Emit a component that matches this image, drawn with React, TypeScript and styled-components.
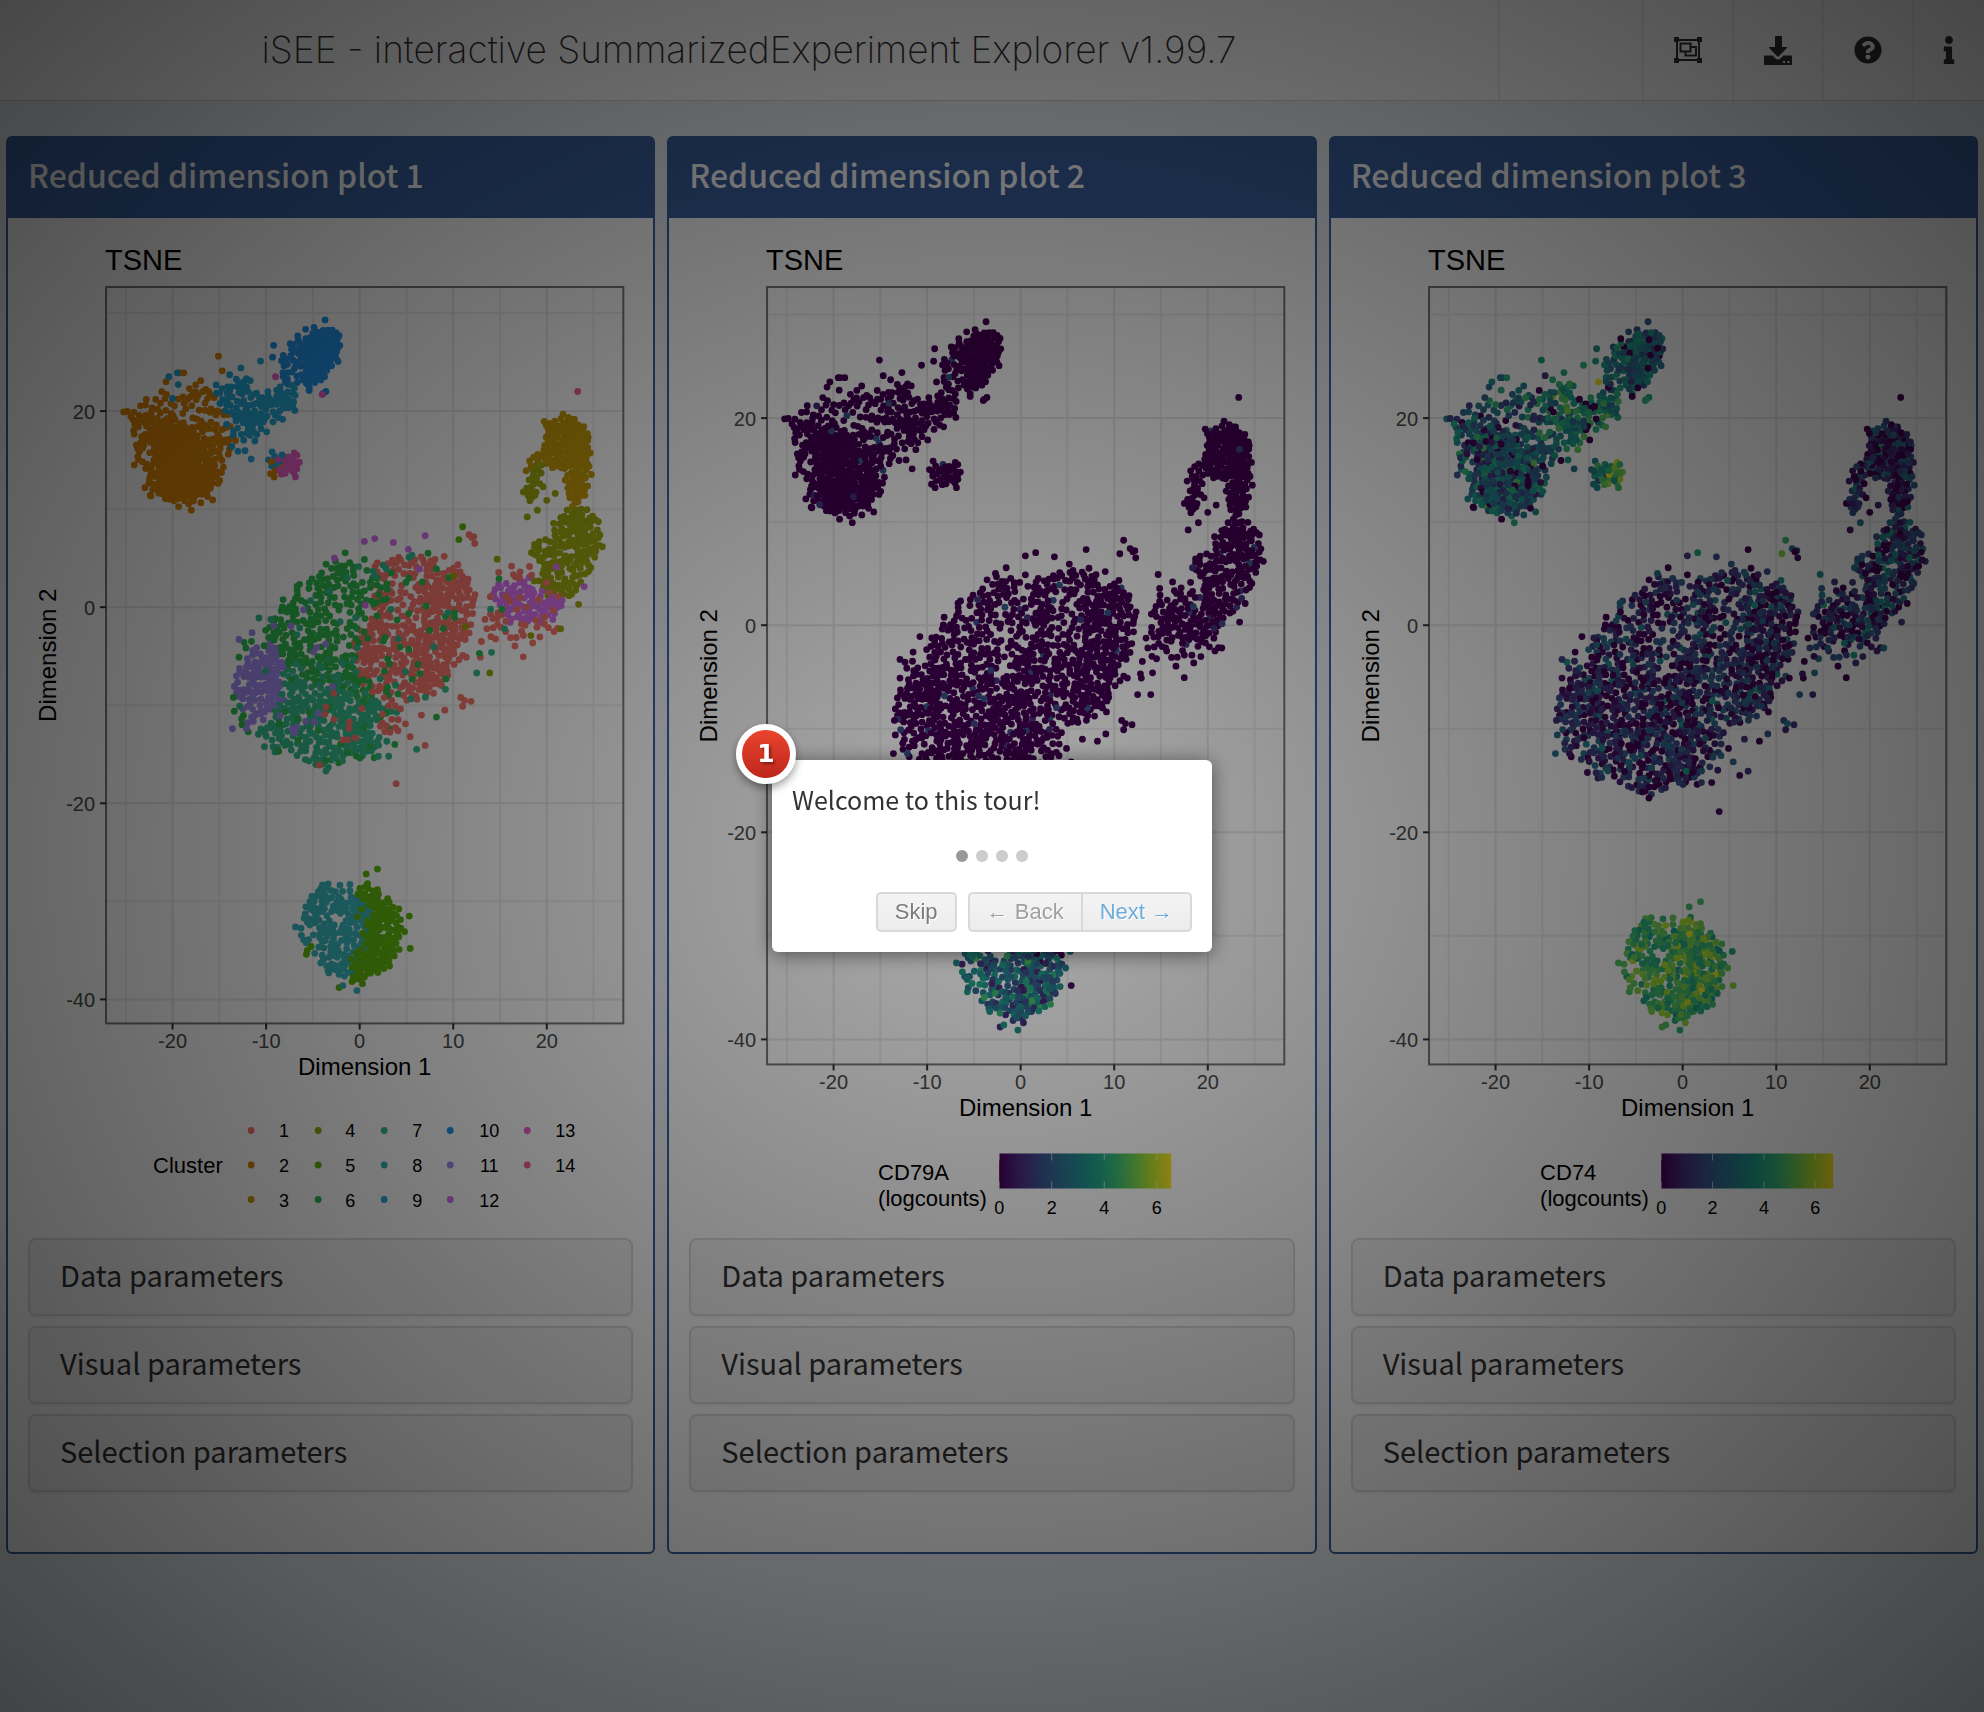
import React from "react";
import styled, { createGlobalStyle, css } from "styled-components";
import { FaInfo, FaQuestionCircle } from "react-icons/fa";

const uiFont = `"Noto Sans CJK SC", "Noto Sans", sans-serif`;
const plotFont = `"Liberation Sans", Arial, sans-serif`;
const brand = "#3b62a2";

const GlobalStyle = createGlobalStyle`
  *, *::before, *::after { box-sizing: border-box; }
  body { margin: 0; background: #ecf0f5; font-family: ${uiFont}; color: #333; }
  button { font: inherit; color: inherit; cursor: pointer; }
`;

/* ---------- header ---------- */

const Header = styled.header`
  display: flex;
  height: 101px;
  background: #fff;
  border-bottom: 1px solid #d2d6de;
`;

const Logo = styled.h1`
  flex: 0 1 1500px;
  margin: 0;
  padding: 0 24px;
  border-right: 2px solid #eee;
  font-family: Inter, "Liberation Sans", sans-serif;
  font-size: 37px;
  font-weight: 200;
  line-height: 100px;
  text-align: center;
  white-space: nowrap;
`;

const Nav = styled.nav`
  flex: 1;
  display: flex;
  justify-content: flex-end;
`;

const NavButton = styled.button<{ $width: number }>`
  display: flex;
  align-items: center;
  justify-content: center;
  width: ${(p) => p.$width}px;
  padding: 0;
  border: 0;
  border-left: 2px solid #eee;
  background: none;
  font-size: 28px;
`;

const GroupIcon = () => (
  <svg width="28" height="26" viewBox="0 0 28 26" fill="none" stroke="currentColor" strokeWidth="2">
    <path d="M3 3h22v20H3z" />
    <path d="M6.5 6.5h10v8h-10z" />
    <path d="M17 10h5v8.500h-10.500v-4" />
    <g fill="currentColor" stroke="none">
      <path d="M0 0h5v5H0zM23 0h5v5h-5zM0 21h5v5H0zM23 21h5v5h-5z" />
    </g>
  </svg>
);

const DownloadIcon = () => (
  <svg width="28" height="29" viewBox="0 0 28 29" fill="currentColor">
    <path d="M11 1q0-1 1-1h5q1 0 1 1v10h4.500q1 0 .4 1l-8 8.200q-.9.800-1.800 0l-8-8.200q-.6-1 .4-1H11z" />
    <path
      fillRule="evenodd"
      d="M1 19.500h7.500l3.300 3.200q2.200 1.800 4.400 0l3.300-3.200H27q1 0 1 1V28q0 1-1 1H1q-1 0-1-1v-7.500q0-1 1-1zM19 25v2h2v-2zM23.500 25v2h2v-2z"
    />
  </svg>
);

/* ---------- panels ---------- */

const Board = styled.main`
  display: grid;
  grid-template-columns: repeat(3, minmax(0, 1fr));
  gap: 12px;
  padding: 35px 6px 40px;
`;

const Box = styled.section`
  border: 2px solid ${brand};
  border-radius: 6px;
  background: #fff;
`;

const BoxTitle = styled.h2`
  margin: 0;
  padding: 12px 20px 20px;
  background: ${brand};
  color: #fff;
  font-size: 32px;
  font-weight: 500;
  line-height: 48px;
`;

const BoxBody = styled.div`
  padding: 20px 20px 60px;
`;

const Parameters = styled.div`
  display: flex;
  flex-direction: column;
  gap: 10px;
`;

const ParameterButton = styled.button`
  height: 78px;
  padding: 0 30px 6px;
  border: 2px solid #ddd;
  border-radius: 8px;
  background: #f5f5f5;
  box-shadow: 0 2px 2px rgba(0, 0, 0, 0.05);
  font-size: 29px;
  line-height: 40px;
  text-align: left;
`;

/* ---------- data ---------- */

type Pt = [number, number];
interface Cell {
  x: number;
  y: number;
  cluster: number;
  cd79a: number;
  cd74: number;
}

const clusterColors = [
  "#f8766d", "#dc8508", "#c49a0c", "#9ba610", "#5fb40e", "#30b84e", "#35bb8c",
  "#38b4ba", "#26aad8", "#2394ea", "#a08aee", "#d670ee", "#ee60cc", "#f4629e",
];

function makeRandom(seed: number) {
  let s = seed;
  return () => {
    s = (s + 0x6d2b79f5) | 0;
    let t = Math.imul(s ^ (s >>> 15), 1 | s);
    t = (t + Math.imul(t ^ (t >>> 7), 61 | t)) ^ t;
    return ((t ^ (t >>> 14)) >>> 0) / 4294967296;
  };
}

const random = makeRandom(42);
const gauss = () => random() + random() + random() + random() - 2;

function inside(x: number, y: number, poly: Pt[]) {
  let hit = false;
  for (let i = 0, j = poly.length - 1; i < poly.length; j = i++) {
    const [xi, yi] = poly[i];
    const [xj, yj] = poly[j];
    if (yi > y !== yj > y && x < ((xj - xi) * (y - yi)) / (yj - yi) + xi) hit = !hit;
  }
  return hit;
}

const blob: Pt[] = [[-13.9, -8.2], [-12.8, -4.2], [-10.1, -1], [-7, 1.6], [-5.4, 3.6], [-2.4, 5], [0.7, 4.9], [4.3, 5.2], [8.1, 5.4], [9.2, 4.3], [11, 4.3], [12, 2.7], [12.4, 0.1], [12, -2.8], [10.1, -6.1], [9.2, -8.6], [5.6, -10], [3.9, -11.5], [4.7, -13.3], [2, -15.1], [-3.6, -16.3], [-6.3, -15.5], [-9.7, -14.4], [-11.9, -13], [-13.5, -11.5]];

/* [cluster, number of cells, outline] */
const regions: [number, number, Pt[]][] = [
  [2, 250, [[-24.7, 19.8], [-23.4, 21.3], [-21.6, 22.1], [-19.6, 21.6], [-16.9, 22.9], [-15.5, 22.2], [-14.6, 20.2], [-13.5, 18.4], [-14.2, 14], [-15.3, 12.7], [-16, 11.1], [-18, 10.3], [-20.9, 10.9], [-22.5, 11.6], [-22.9, 14], [-24.1, 14.7], [-24.1, 16.9]]],
  [2, 130, [[-22.4, 19.5], [-18, 17.5], [-15.5, 15], [-16, 12.500], [-18, 11.5], [-21, 11.2], [-21.5, 13.5]]],
  [9, 120, [[-15.3, 22.7], [-12.4, 23.1], [-9.7, 22], [-7.4, 22.7], [-6.3, 21.6], [-6.7, 20.5], [-8.8, 19.1], [-9.7, 18], [-11.5, 16.9], [-12.8, 15.8], [-15.1, 16.4], [-13.7, 18], [-14.2, 19.8], [-15.3, 20.5]]],
  [10, 90, [[-5.1, 28.8], [-3.8, 28], [-2.6, 27.6], [-2.4, 25.6], [-3.3, 24.7], [-4.7, 23.1], [-6, 22.6], [-8.8, 23.5], [-8.1, 24.9], [-7.6, 26.5], [-6.3, 28]]],
  [10, 75, [[-4.6, 28], [-2.6, 27.4], [-2.6, 25.8], [-4.6, 23.2], [-5.4, 23.4], [-5.2, 26]]],
  [9, 8, [[-9.4, 15.8], [-8, 15.6], [-8.4, 14.2], [-9.4, 14.2]]],
  [2, 5, [[-9.2, 14.2], [-8.4, 15], [-8.4, 14], [-9.2, 13.7]]],
  [13, 20, [[-8.5, 14.3], [-7.5, 15.2], [-6.9, 14.9], [-6.9, 14.1], [-8, 14]]],
  [3, 120, [[20.5, 18.7], [22.3, 19.2], [23.4, 18.7], [24.3, 17.4], [24.1, 14.3], [21.6, 14.2], [19.8, 15.1], [19.8, 16.2], [20.3, 17.6]]],
  [3, 32, [[22.1, 14.2], [24.1, 14.2], [24, 12.2], [23.6, 10.9], [22.5, 10.9], [22.5, 12.5]]],
  [4, 22, [[17.8, 10.8], [18.2, 12.5], [18.9, 14], [19.8, 14.3], [18.8, 12.8], [18.1, 11.2]]],
  [3, 6, [[18.5, 13.6], [18.9, 15.6], [19.1, 14.4]]],
  [4, 165, [[23.6, 10.3], [24.8, 9.4], [25.6, 8.1], [25, 4.5], [24, 3.2], [22.3, 1.1], [20.2, 1.6], [18.9, 2.7], [19.6, 4.5], [18.2, 5.6], [19.8, 6.8], [21, 8.3], [22, 10.1]]],
  [12, 75, [[14.2, 1.5], [16.2, 2.7], [17.8, 2.7], [19.8, 1.6], [22, 0.3], [20.4, -0.8], [19.5, -1.8], [16.9, -1.3], [15.2, -0.8]]],
  [1, 50, [[13.3, -1.9], [14.5, 3.4], [18, 4.4], [21.5, 2], [22.2, -1.2], [18.3, -4.6], [16.4, -4.6], [13.8, -3]]],
  [11, 105, [[-13.7, -8.2], [-12.6, -6], [-11.3, -4.4], [-9.4, -3.7], [-8.7, -6.4], [-7.8, -9.3], [-9.6, -10.6], [-11.7, -12], [-12.4, -9.7]]],
  [1, 340, [[0.7, 4.3], [4.3, 5], [8.1, 5.2], [9.2, 4.1], [10.9, 4.1], [11.7, 2.7], [12.1, 0.1], [11.8, -2.8], [10, -6], [9, -8.4], [5.6, -9.7], [-0.2, -7.5], [-0.6, -3.5], [1.6, -0.9], [2, 3]]],
  [1, 60, [[8.500, 3], [11.8, 3], [11.8, -1.5], [9.5, -7], [6, -8.5], [5, -4]]],
  [6, 215, [[-9.6, -3.9], [-9.8, -1.2], [-6.8, 1.4], [-5.2, 3.4], [-2.4, 4.7], [0.7, 3.9], [4.4, 2.9], [3.8, 1.2], [1.6, -0.9], [1, -4.2], [2, -7.9], [-0.2, -9.3], [-7, -7.1]]],
  [7, 250, [[-7.4, -5.7], [-0.2, -5.7], [1.1, -9.3], [4, -10.4], [1.1, -11.5], [2.7, -14.2], [0.2, -15.2], [-3.6, -16], [-6.3, -15.2], [-9.6, -14.2], [-11.7, -12.8], [-9.6, -11.5], [-7.8, -9.3]]],
  [6, 100, blob],
  [7, 45, blob],
  [11, 20, [[-12, -4], [-4, 1], [-1, -11], [-8, -14]]],
  [1, 26, [[-4, -8], [2, -8], [5, -12], [1, -14], [-4, -15]]],
  [8, 165, [[-6.5, -32.4], [-5.2, -29.6], [-3.8, -28.2], [-1.4, -28.2], [0.1, -29.6], [1.2, -31.3], [0.8, -34], [-0.4, -36.5], [-1.4, -37.6], [-3.2, -37], [-4.5, -35.6], [-6.1, -34]]],
  [5, 145, [[-0.4, -29.8], [0.8, -27.8], [1.6, -29.4], [3.5, -30.4], [4.1, -32.3], [4.1, -34], [3.6, -35.5], [2.6, -36.8], [1.1, -37.4], [-0.3, -38.4], [-0.7, -36.4], [0.3, -34], [0, -32.3]]],
];

const scattered: [number, Pt[]][] = [
  [1, [[11.7, 7.4], [12.2, 7.2], [12.3, 6.5], [12, 7.1], [10.8, -9.2], [11.2, -9.5], [11.9, -9.6], [11, -10.1], [9.1, -10.5], [6.6, -11], [5.4, -13.2], [7, -14.1], [4.9, -11.9], [4.1, -12.6], [3.9, -18], [-4.3, -16.1], [13, -3.5], [12.9, -5.1], [11.4, -5.1]]],
  [2, [[-15.1, 25.6], [-14.7, 24.1], [-19.3, 23.9], [-18.8, 23.9], [-20.7, 23], [-18.2, 22.3], [-17, 23.1], [-24.1, 14.5], [-22.4, 11.4], [-18, 9.9]]],
  [4, [[17.9, 9.2], [19, 9.9], [20, 10.9], [20.9, 11.6], [19.6, 12.3], [25.6, 6.3], [14.7, 4.9], [13.9, -6.7], [21.5, -2.2], [23.4, 0.3], [18.3, -2.9], [11.3, -2], [10, 3.2]]],
  [5, [[11, 8.2], [10.6, 6.9], [5.3, -31.5], [4.8, -33.1], [5.4, -34.8], [1.9, -26.7], [0.7, -27.2], [-2.2, -38.8], [0.3, -38.4], [-5.7, -35.4], [-5.6, -35], [-5.2, -34.6]]],
  [6, [[8.2, -11.2], [-13.5, -9.2], [-13.4, -10.6], [12.8, -4.7], [-12.9, -5.1], [7.3, 5.5], [14.9, 2.9], [15.2, -0.2]]],
  [7, [[14.1, -4.6], [12.5, -6.7], [15.5, -2.2], [14, -0.2], [2, -15.2], [3.1, -15.2], [6.1, -14.5], [-3.6, -16.7]]],
  [8, [[-0.3, -39.1], [-1.8, -38.6], [-3.3, -37.3]]],
  [9, [[-20.4, 23.5], [-19.5, 23.9], [-19.4, 22.7], [-12.7, 24.4], [-13.9, 23.7], [-12.1, 23.3], [-11.6, 15.1], [-20, 21.3], [-10.6, 25.1], [-13, 15.9]]],
  [10, [[-3.7, 29.3], [-9.2, 26.7], [-9.3, 25.5], [-5.4, 22.1], [-3.6, 22], [-3.9, 21.8]]],
  [11, [[-13.6, -12.4], [-12.1, -12.4], [-12.9, -3.3], [-11.5, -2.6], [-9.2, -1.9]]],
  [12, [[0.5, 6.7], [1.6, 7], [3.6, 6.6], [5.2, 5.9], [7, 7.3], [-2.7, 5], [24, 2.1], [21, 4.1], [6.4, 3.9], [0.6, 0.2]]],
  [13, [[-9, 23.5], [-4, 21.7]]],
  [14, [[23.3, 22]]],
];

/* mean and spread of the CD74 logcounts in each cluster */
const cd74Levels: Record<number, Pt> = {
  1: [1.1, 1.1], 2: [2.6, 1.1], 3: [1, 1.1], 4: [1.7, 1.2], 5: [4.9, 0.7], 6: [0.9, 1.1], 7: [0.9, 1.1],
  8: [4.9, 0.7], 9: [3.8, 0.9], 10: [2.9, 0.9], 11: [1, 1], 12: [1.2, 1.1], 13: [5.4, 0.8], 14: [0, 0],
};

function makeCell(x: number, y: number, cluster: number): Cell {
  const [mean, spread] = cd74Levels[cluster];
  const cd74 = Math.max(0, Math.min(6.6, mean + gauss() * spread * 1.6));
  const bCell = y < -25;
  const cd79a = bCell ? Math.max(0, 2.5 + gauss() * 1.8) : random() < 0.03 ? 0.8 + random() * 1.2 : 0;
  return { x, y, cluster, cd79a, cd74: random() < 0.06 && !bCell && cluster !== 13 ? 0 : cd74 };
}

function makeCells(): Cell[] {
  const cells: Cell[] = [];
  for (const [cluster, count, poly] of regions) {
    const xs = poly.map((p) => p[0]);
    const ys = poly.map((p) => p[1]);
    const x0 = Math.min(...xs);
    const x1 = Math.max(...xs);
    const y0 = Math.min(...ys);
    const y1 = Math.max(...ys);
    let placed = 0;
    for (let tries = 0; placed < count && tries < count * 60; tries++) {
      const px = x0 + random() * (x1 - x0);
      const py = y0 + random() * (y1 - y0);
      if (!inside(px, py, poly)) continue;
      const x = px + gauss() * 0.5;
      const y = py + gauss() * 0.5;
      if (cells.some((c) => Math.hypot(c.x - x, c.y - y) < 0.34)) continue;
      cells.push(makeCell(x, y, cluster));
      placed++;
    }
  }
  for (const [cluster, points] of scattered) {
    for (const [x, y] of points) cells.push(makeCell(x, y, cluster));
  }
  return cells;
}

const cells = makeCells();

const viridisStops = [
  [68, 1, 84], [72, 40, 120], [62, 74, 137], [49, 104, 142], [38, 130, 142],
  [31, 158, 137], [53, 183, 121], [109, 205, 89], [180, 222, 44], [253, 231, 37],
];

function viridis(value: number, max: number) {
  const t = Math.max(0, Math.min(1, value / max)) * (viridisStops.length - 1);
  const i = Math.min(viridisStops.length - 2, Math.floor(t));
  const mix = viridisStops[i].map((c, k) => Math.round(c + (viridisStops[i + 1][k] - c) * (t - i)));
  return `rgb(${mix.join(",")})`;
}

/* ---------- plot ---------- */

const PlotSvg = styled.svg`
  display: block;
  width: 100%;
  height: auto;
  font-family: ${plotFont};
`;

const PlotText = styled.text<{ $role: "title" | "axis" | "legend" | "tick" | "key"; $anchor?: string }>`
  text-anchor: ${(p) => p.$anchor ?? "start"};
  ${(p) =>
    ({
      title: css`font-size: 29px; fill: #000;`,
      axis: css`font-size: 24px; fill: #000;`,
      legend: css`font-size: 22px; fill: #000;`,
      tick: css`font-size: 20px; fill: #4d4d4d;`,
      key: css`font-size: 18px; fill: #000;`,
    })[p.$role]}
`;

const left = 100;
const right = 617;
const top = 287;
const xs = (v: number) => 353.5 + v * 9.35;

interface PlotSpec {
  id: number;
  gene?: "CD79A" | "CD74";
  max: number;
}

const ClusterLegend = () => {
  const columns = [
    { dot: 245, label: 278 },
    { dot: 312, label: 344 },
    { dot: 378, label: 411 },
    { dot: 444, label: 483 },
    { dot: 521, label: 559 },
  ];
  return (
    <g>
      <PlotText $role="legend" x={147} y={1173}>Cluster</PlotText>
      {clusterColors.map((color, i) => {
        const column = columns[Math.floor(i / 3)];
        const y = 1130 + (i % 3) * 34.5;
        return (
          <g key={color}>
            <circle cx={column.dot} cy={y} r="3.4" fill={color} />
            <PlotText $role="key" $anchor="middle" x={column.label} y={y + 7}>{i + 1}</PlotText>
          </g>
        );
      })}
    </g>
  );
};

const GradientLegend = ({ gene, max }: { gene: string; max: number }) => {
  const id = `scale-${gene}`;
  return (
    <g>
      <defs>
        <linearGradient id={id}>
          {viridisStops.map((c, i) => (
            <stop key={i} offset={i / (viridisStops.length - 1)} stopColor={`rgb(${c.join(",")})`} />
          ))}
        </linearGradient>
      </defs>
      <PlotText $role="legend" x={211} y={1180}>{gene}</PlotText>
      <PlotText $role="legend" x={211} y={1205}>(logcounts)</PlotText>
      <rect x={332} y={1153} width={172} height={35} fill={`url(#${id})`} />
      {[0, 2, 4, 6].map((v) => {
        const x = 332 + (v / max) * 172;
        return (
          <g key={v}>
            <path d={`M${x} 1153v7M${x} 1181v7`} stroke="#fff" strokeOpacity="0.6" />
            <PlotText $role="key" $anchor="middle" x={x} y={1213}>{v}</PlotText>
          </g>
        );
      })}
    </g>
  );
};

const Plot = ({ gene, max }: PlotSpec) => {
  const bottom = gene ? 1064 : 1023;
  const zero = gene ? 625 : 607;
  const unit = gene ? 10.35 : 9.8;
  const ys = (v: number) => zero - v * unit;
  const lines = (xv: number[], yv: number[]) =>
    xv.map((v) => `M${xs(v)} ${top}V${bottom}`).join("") + yv.map((v) => `M${left} ${ys(v)}H${right}`).join("");
  const fill = (c: Cell) =>
    gene ? viridis(gene === "CD74" ? c.cd74 : c.cd79a, max) : clusterColors[c.cluster - 1];
  return (
    <PlotSvg viewBox="22 238 605 999" role="img" aria-label="TSNE">
      <PlotText $role="title" x={99} y={270}>TSNE</PlotText>
      <path d={lines([-25, -15, -5, 5, 15, 25], [30, 10, -10, -30])} stroke="#efefef" strokeWidth="2" fill="none" />
      <path d={lines([-20, -10, 0, 10, 20], [20, 0, -20, -40])} stroke="#e8e8e8" strokeWidth="2" fill="none" />
      {cells.map((c, i) => (
        <circle key={i} cx={xs(c.x).toFixed(1)} cy={ys(c.y).toFixed(1)} r="3.400" fill={fill(c)} />
      ))}
      <rect x={left} y={top} width={right - left} height={bottom - top} fill="none" stroke="#7a7a7a" strokeWidth="2" />
      {[20, 0, -20, -40].map((v) => (
        <g key={v}>
          <path d={`M${left - 6} ${ys(v)}h6`} stroke="#333" strokeWidth="2" />
          <PlotText $role="tick" $anchor="end" x={left - 11} y={ys(v) + 8}>{v}</PlotText>
        </g>
      ))}
      {[-20, -10, 0, 10, 20].map((v) => (
        <g key={v}>
          <path d={`M${xs(v)} ${bottom}v6`} stroke="#333" strokeWidth="2" />
          <PlotText $role="tick" $anchor="middle" x={xs(v)} y={bottom + 25}>{v}</PlotText>
        </g>
      ))}
      <PlotText $role="axis" $anchor="middle" x={(left + right) / 2} y={bottom + 52}>Dimension 1</PlotText>
      <PlotText
        $role="axis"
        $anchor="middle"
        transform={`translate(50 ${(top + bottom) / 2}) rotate(-90)`}
      >
        Dimension 2
      </PlotText>
      {gene ? <GradientLegend gene={gene} max={max} /> : <ClusterLegend />}
    </PlotSvg>
  );
};

/* ---------- tour ---------- */

const Overlay = styled.div`
  position: fixed;
  inset: 0;
  opacity: 0.8;
  background: radial-gradient(ellipse farthest-corner at center, rgba(0, 0, 0, 0.4) 0, rgba(0, 0, 0, 0.9) 100%);
`;

const TourLayer = styled.div`
  position: fixed;
  inset: 0;
  display: grid;
  place-items: center;
`;

const Tour = styled.div`
  position: relative;
  width: 440px;
  padding: 20px;
  border-radius: 6px;
  background: #fff;
  box-shadow: 0 2px 20px rgba(0, 0, 0, 0.5);
`;

const StepNumber = styled.span`
  position: absolute;
  top: -36px;
  left: -36px;
  width: 60px;
  height: 60px;
  border: 6px solid #fff;
  border-radius: 50%;
  background: linear-gradient(#f0482f, #b8221a);
  background-origin: border-box;
  box-shadow: 0 4px 8px rgba(0, 0, 0, 0.4);
  color: #fff;
  font: bold 25px/47px "DejaVu Sans", Verdana, sans-serif;
  text-align: center;
  text-shadow: 2px 2px 3px rgba(0, 0, 0, 0.4);
`;

const TourText = styled.p`
  margin: 0;
  font-size: 25px;
  line-height: 38px;
`;

const Bullets = styled.div`
  display: flex;
  justify-content: center;
  gap: 8px;
  padding: 32px 0 30px;
`;

const Bullet = styled.button<{ $active: boolean }>`
  width: 12px;
  height: 12px;
  padding: 0;
  border: 0;
  border-radius: 50%;
  background: ${(p) => (p.$active ? "#999" : "#ccc")};
`;

const Actions = styled.div`
  display: flex;
  justify-content: flex-end;
  height: 40px;
`;

const Action = styled.button<{ $tone: string; $side?: "left" | "right" }>`
  padding: 0 17px;
  border: 2px solid #d9d9d9;
  border-radius: ${(p) => (p.$side === "left" ? "5px 0 0 5px" : p.$side === "right" ? "0 5px 5px 0" : "5px")};
  margin-left: ${(p) => (p.$side === "left" ? "11px" : "0")};
  border-right-width: ${(p) => (p.$side === "left" ? "0" : "2px")};
  background: linear-gradient(#f4f4f4, #ececec);
  color: ${(p) => p.$tone};
  font-family: ${plotFont};
  font-size: 22px;
  line-height: 36px;
  text-shadow: 1px 1px 0 #fff;
  white-space: nowrap;
`;

const plots: PlotSpec[] = [
  { id: 1, max: 6.7 },
  { id: 2, gene: "CD79A", max: 6.55 },
  { id: 3, gene: "CD74", max: 6.7 },
];

export default function App() {
  return (
    <>
      <GlobalStyle />
      <Header>
        <Logo>iSEE - interactive SummarizedExperiment Explorer v1.99.7</Logo>
        <Nav>
          <NavButton $width={90} aria-label="Organize panels"><GroupIcon /></NavButton>
          <NavButton $width={90} aria-label="Download"><DownloadIcon /></NavButton>
          <NavButton $width={90} aria-label="Help"><FaQuestionCircle /></NavButton>
          <NavButton $width={72} aria-label="Information"><FaInfo /></NavButton>
        </Nav>
      </Header>
      <Board>
        {plots.map((plot) => (
          <Box key={plot.id}>
            <BoxTitle>Reduced dimension plot {plot.id}</BoxTitle>
            <BoxBody>
              <Plot {...plot} />
              <Parameters>
                <ParameterButton>Data parameters</ParameterButton>
                <ParameterButton>Visual parameters</ParameterButton>
                <ParameterButton>Selection parameters</ParameterButton>
              </Parameters>
            </BoxBody>
          </Box>
        ))}
      </Board>
      <Overlay />
      <TourLayer>
        <Tour role="dialog" aria-label="Tour">
          <StepNumber>1</StepNumber>
          <TourText>Welcome to this tour!</TourText>
          <Bullets>
            {[1, 2, 3, 4].map((n) => (
              <Bullet key={n} $active={n === 1} aria-label={`Step ${n}`} />
            ))}
          </Bullets>
          <Actions>
            <Action $tone="#7c7c7c">Skip</Action>
            <Action $tone="#a0a0a0" $side="left" disabled>← Back</Action>
            <Action $tone="#6eadda" $side="right">Next →</Action>
          </Actions>
        </Tour>
      </TourLayer>
    </>
  );
}
